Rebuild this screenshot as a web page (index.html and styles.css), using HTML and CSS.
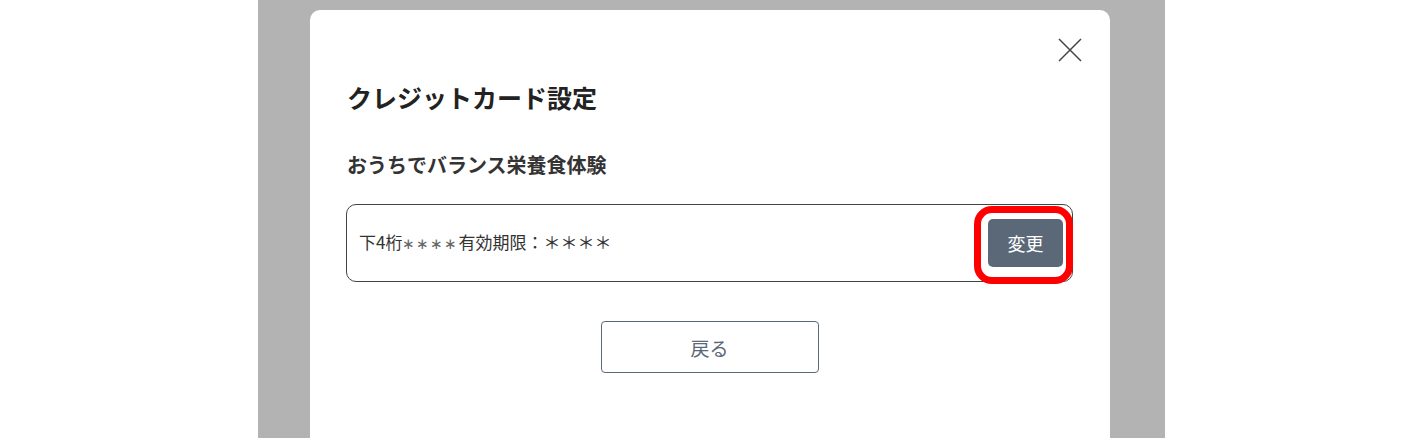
FILE: index.html
```html
<!DOCTYPE html>
<html lang="ja">
<head>
<meta charset="utf-8">
<link rel="stylesheet" href="styles.css">
</head>
<body>
<div class="page">
  <div class="backdrop">
    <div class="modal">
      <button class="close" aria-label="閉じる">
        <svg width="24" height="24" viewBox="0 0 24 24"><path d="M1 1 L23 23 M23 1 L1 23" stroke="#444" stroke-width="1.5" fill="none"/></svg>
      </button>
      <h1 class="title">クレジットカード設定</h1>
      <h2 class="subtitle">おうちでバランス栄養食体験</h2>
      <div class="card">
        <span class="card-text">下4桁<span class="small-ast">∗∗∗∗</span>有効期限：＊＊＊＊</span>
        <div class="change-wrap">
          <button class="change">変更</button>
          <span class="highlight"></span>
        </div>
      </div>
      <div class="actions">
        <button class="back">戻る</button>
      </div>
    </div>
  </div>
</div>
</body>
</html>
```

FILE: styles.css
```css
html, body {
  margin: 0;
  padding: 0;
  background: #fff;
  height: 100%;
  overflow: hidden;
}
body {
  font-family: "Noto Sans CJK JP", "Noto Sans", sans-serif;
  color: #333;
}
.page {
  display: flex;
  justify-content: flex-start;
  height: 438px;
  overflow: hidden;
}
.backdrop {
  margin-left: 258px;
  width: 907px;
  height: 438px;
  background: #b3b3b3;
  padding-top: 10px;
  box-sizing: border-box;
  overflow: hidden;
}
.modal {
  position: relative;
  margin-left: 52px;
  width: 800px;
  height: 440px;
  background: #fff;
  border-radius: 10px;
  padding: 72px 37px 0 36px;
  box-sizing: border-box;
}
.close {
  position: absolute;
  top: 28px;
  right: 28px;
  width: 24px;
  height: 24px;
  padding: 0;
  border: 0;
  background: none;
  display: block;
}
.close svg { display: block; }
.title {
  margin: 0 0 0 1px;
  font-size: 25px;
  font-weight: 700;
  line-height: 30px;
  color: #222;
}
.subtitle {
  margin: 40px 0 0 1px;
  font-size: 20px;
  font-weight: 700;
  line-height: 26px;
  color: #333;
}
.card {
  margin-top: 26px;
  height: 78px;
  border: 1px solid #444;
  border-radius: 10px;
  box-sizing: border-box;
  display: flex;
  align-items: center;
  justify-content: space-between;
  padding: 0 9px 0 12px;
}
.card-text {
  font-size: 17px;
  color: #333;
  letter-spacing: 0;
  margin-top: -3px;
}
.small-ast {
  font-size: 15px;
  color: #666;
  letter-spacing: 1px;
}
.change-wrap {
  position: relative;
  display: flex;
}
.change {
  width: 75px;
  height: 48px;
  border: 0;
  border-radius: 5px;
  background: #5a6878;
  color: #fff;
  font-family: inherit;
  font-size: 18px;
  padding: 0;
}
.highlight {
  position: absolute;
  left: -14px;
  top: -13px;
  right: -10px;
  bottom: -17px;
  border: 7px solid #ff0000;
  border-radius: 18px;
  pointer-events: none;
}
.actions {
  display: flex;
  justify-content: center;
  margin-top: 39px;
}
.back {
  width: 218px;
  height: 52px;
  border: 1px solid #5a6878;
  border-radius: 4px;
  background: #fff;
  color: #5a6878;
  font-family: inherit;
  font-size: 19px;
  padding: 0;
}
```
